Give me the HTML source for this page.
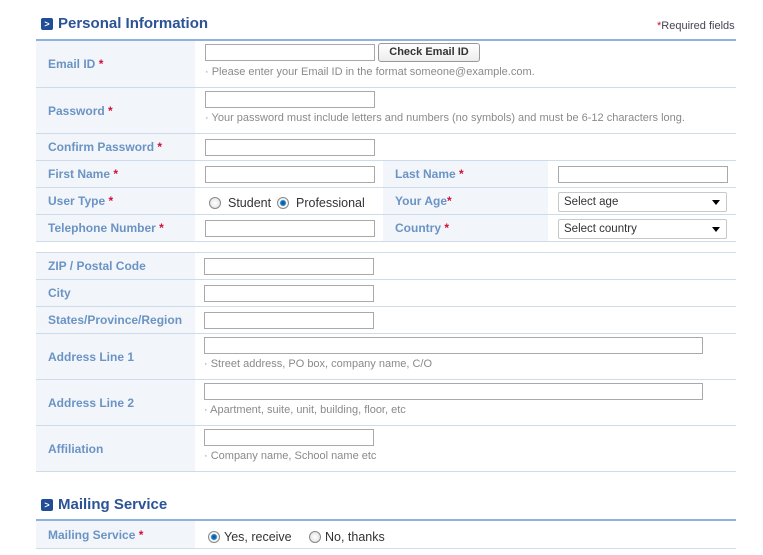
<!DOCTYPE html>
<html><head><meta charset="utf-8"><style>
*{margin:0;padding:0;box-sizing:border-box}
body{width:763px;height:555px;background:#fff;position:relative;overflow:hidden;font-family:"Liberation Sans",Tahoma,sans-serif}
.a{position:absolute}
.lb{position:absolute;background:#f2f6fb}
.hl{position:absolute;left:36px;width:700px;height:1px;background:#cddbeb}
.lab{position:absolute;font:bold 12px "Liberation Sans",sans-serif;color:#6b93c4;white-space:nowrap}
.lab b{color:#d0103a}
.in{position:absolute;height:17px;border:1px solid #a9a9a9;background:#fff}
.hint{position:absolute;font-size:11px;color:#8a8a8a;white-space:nowrap}
.sel{position:absolute;height:20px;border:1px solid #c8c8c8;border-radius:2px;background:#fff;font-size:11.5px;color:#333;padding:3px 0 0 5px}
.sel:after{content:"";position:absolute;right:6px;top:7px;border:4px solid transparent;border-top:5px solid #000;border-bottom:0}
.h{position:absolute;font:bold 15px "Liberation Sans",sans-serif;color:#2b5396}
.ico{position:absolute;width:12px;height:12px;background:#1f4d96;border-radius:2px;color:#fff;font:bold 9px sans-serif;text-align:center;line-height:12px}
.rd{position:absolute;width:12px;height:12px;border-radius:50%;border:1px solid #888;background:radial-gradient(#fff,#ddd)}
.rd.on{background:radial-gradient(circle,#0a4b8a 0,#1a7fc8 2.5px,#fff 3.5px,#e8e8e8 6px)}
.rt{position:absolute;font-size:12.5px;color:#333}
</style></head><body>
<div class="ico" style="left:41px;top:18px">&gt;</div>
<div class="h" style="left:58px;top:15px">Personal Information</div>
<div class="a" style="left:657px;top:20px;font-size:11px;color:#445"><span style="color:#d0103a">*</span>Required fields</div>
<div class="a" style="left:36px;top:39px;width:700px;height:2px;background:#8fb1dd"></div>

<div class="lb" style="left:36px;top:41px;width:159px;height:200px"></div>
<div class="lb" style="left:383px;top:160px;width:165px;height:81px"></div>
<div class="lb" style="left:36px;top:253px;width:159px;height:218px"></div>
<div class="lb" style="left:36px;top:521px;width:159px;height:27px"></div>

<div class="hl" style="top:87px"></div>
<div class="hl" style="top:133px"></div>
<div class="hl" style="top:160px"></div>
<div class="hl" style="top:187px"></div>
<div class="hl" style="top:214px"></div>
<div class="hl" style="top:241px"></div>
<div class="hl" style="top:252px"></div>
<div class="hl" style="top:279px"></div>
<div class="hl" style="top:306px"></div>
<div class="hl" style="top:333px"></div>
<div class="hl" style="top:379px"></div>
<div class="hl" style="top:425px"></div>
<div class="hl" style="top:471px"></div>
<div class="hl" style="top:548px"></div>

<div class="lab" style="left:48px;top:57px">Email ID <b>*</b></div>
<div class="in" style="left:205px;top:44px;width:170px"></div>
<div class="a" style="left:378px;top:43px;width:102px;height:19px;border:1px solid #999;border-radius:3px;background:linear-gradient(#fff,#ececec);font:bold 11px 'Liberation Sans',sans-serif;color:#333;text-align:center;line-height:17px">Check Email ID</div>
<div class="hint" style="left:205px;top:66px">· Please enter your Email ID in the format someone@example.com.</div>

<div class="lab" style="left:48px;top:104px">Password <b>*</b></div>
<div class="in" style="left:205px;top:91px;width:170px"></div>
<div class="hint" style="left:205px;top:112px">· Your password must include letters and numbers (no symbols) and must be 6-12 characters long.</div>

<div class="lab" style="left:48px;top:140px">Confirm Password <b>*</b></div>
<div class="in" style="left:205px;top:139px;width:170px"></div>

<div class="lab" style="left:48px;top:167px">First Name <b>*</b></div>
<div class="in" style="left:205px;top:166px;width:170px"></div>
<div class="lab" style="left:395px;top:167px">Last Name <b>*</b></div>
<div class="in" style="left:558px;top:166px;width:170px"></div>

<div class="lab" style="left:48px;top:194px">User Type <b>*</b></div>
<div class="rd" style="left:209px;top:197px"></div><div class="rt" style="left:228px;top:196px">Student</div>
<div class="rd on" style="left:277px;top:197px"></div><div class="rt" style="left:296px;top:196px">Professional</div>
<div class="lab" style="left:395px;top:194px">Your Age<b>*</b></div>
<div class="sel" style="left:558px;top:192px;width:169px">Select age</div>

<div class="lab" style="left:48px;top:221px">Telephone Number <b>*</b></div>
<div class="in" style="left:205px;top:220px;width:170px"></div>
<div class="lab" style="left:395px;top:221px">Country <b>*</b></div>
<div class="sel" style="left:558px;top:219px;width:169px">Select country</div>

<div class="lab" style="left:48px;top:259px">ZIP / Postal Code</div>
<div class="in" style="left:204px;top:258px;width:170px"></div>
<div class="lab" style="left:48px;top:286px">City</div>
<div class="in" style="left:204px;top:285px;width:170px"></div>
<div class="lab" style="left:48px;top:313px">States/Province/Region</div>
<div class="in" style="left:204px;top:312px;width:170px"></div>

<div class="lab" style="left:48px;top:350px">Address Line 1</div>
<div class="in" style="left:204px;top:337px;width:499px"></div>
<div class="hint" style="left:204px;top:358px">· Street address, PO box, company name, C/O</div>

<div class="lab" style="left:48px;top:396px">Address Line 2</div>
<div class="in" style="left:204px;top:383px;width:499px"></div>
<div class="hint" style="left:204px;top:404px">· Apartment, suite, unit, building, floor, etc</div>

<div class="lab" style="left:48px;top:442px">Affiliation</div>
<div class="in" style="left:204px;top:429px;width:170px"></div>
<div class="hint" style="left:204px;top:450px">· Company name, School name etc</div>

<div class="ico" style="left:41px;top:499px">&gt;</div>
<div class="h" style="left:58px;top:496px">Mailing Service</div>
<div class="a" style="left:36px;top:519px;width:700px;height:2px;background:#8fb1dd"></div>
<div class="lab" style="left:48px;top:528px">Mailing Service <b>*</b></div>
<div class="rd on" style="left:208px;top:531px"></div><div class="rt" style="left:224px;top:530px">Yes, receive</div>
<div class="rd" style="left:309px;top:531px"></div><div class="rt" style="left:325px;top:530px">No, thanks</div>
</body></html>
